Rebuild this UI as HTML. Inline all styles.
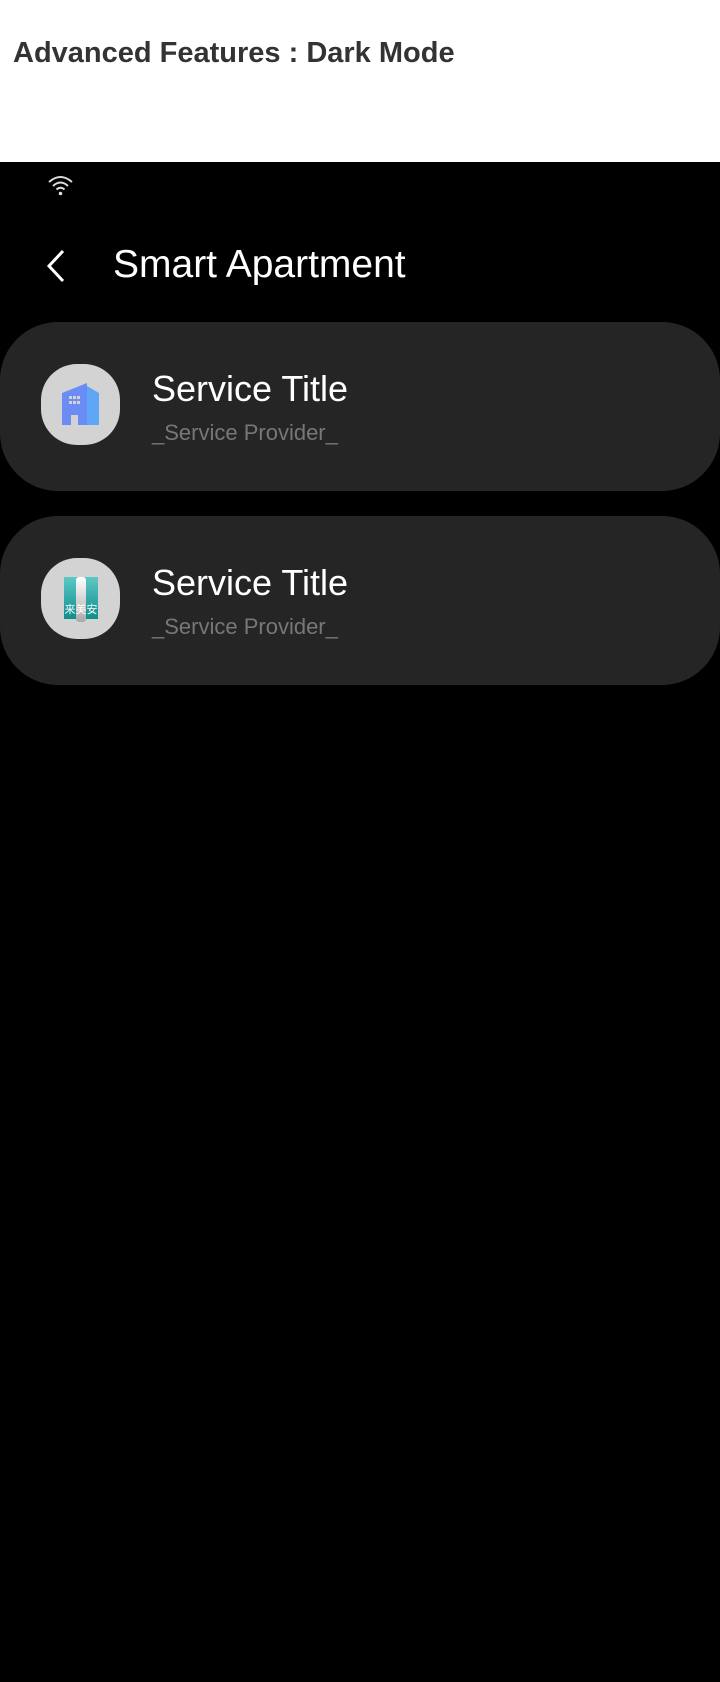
<!DOCTYPE html>
<html><head><meta charset="utf-8"><style>
*{margin:0;padding:0;box-sizing:border-box}
body{width:720px;height:1682px;background:#000;position:relative;overflow:hidden;font-family:"Liberation Sans",sans-serif}
.hdr{position:absolute;left:0;top:0;width:720px;height:162px;background:#fff}
.hdr span{position:absolute;left:13px;top:37px;font-size:29px;font-weight:bold;color:#333;white-space:nowrap}
.t{position:absolute;white-space:nowrap;transform-origin:left top}
.card{position:absolute;left:0;width:720px;height:169px;background:#252525;border-radius:58px}
.icon{position:absolute;left:41px;top:42px;width:79px;height:81px;background:#d3d3d3;border-radius:36px}
</style></head><body>
<div class="hdr"><span>Advanced Features : Dark Mode</span></div>
<svg style="position:absolute;left:47px;top:174px" width="27" height="22" viewBox="0 0 27 22">
<path d="M2 8 Q13.5 -2 25 8" stroke="#ddd" stroke-width="2" fill="none"/>
<path d="M6 12 Q13.5 5 21 12" stroke="#ddd" stroke-width="2" fill="none"/>
<path d="M9.5 15.5 Q13.5 12 17.5 15.5" stroke="#ddd" stroke-width="2" fill="none"/>
<circle cx="13.5" cy="19.5" r="1.8" fill="#ddd"/>
</svg>
<svg style="position:absolute;left:44px;top:249px" width="24" height="34" viewBox="0 0 24 34">
<path d="M19 2 L5 17 L19 32" stroke="#fff" stroke-width="3" fill="none"/>
</svg>
<div class="t" style="left:113px;top:243px;font-size:39px;color:#fff">Smart Apartment</div>

<div class="card" style="top:322px">
<div class="icon">
<svg style="position:absolute;left:21px;top:19px" width="38" height="42" viewBox="0 0 38 42">
<path d="M0 10 L25 0 L25 42 L0 42 Z" fill="#6b8cf5"/>
<path d="M25 3 L37 10 L37 42 L25 42 Z" fill="#5fa6f7"/>
<rect x="9" y="32" width="7" height="10" fill="#d3d3d3"/>
<g fill="#d3d3d3"><rect x="7" y="13" width="3" height="3"/><rect x="11" y="13" width="3" height="3"/><rect x="15" y="13" width="3" height="3"/><rect x="7" y="18" width="3" height="3"/><rect x="11" y="18" width="3" height="3"/><rect x="15" y="18" width="3" height="3"/></g>
</svg>
</div>
<div class="t" style="left:152px;top:46px;font-size:36px;color:#fff">Service Title</div>
<div class="t" style="left:152px;top:98px;font-size:22px;color:#777">_Service Provider_</div>
</div>

<div class="card" style="top:516px">
<div class="icon">
<svg style="position:absolute;left:23px;top:19px" width="34" height="45" viewBox="0 0 34 45">
<defs><linearGradient id="g" x1="0" y1="0" x2="0" y2="1"><stop offset="0" stop-color="#5cc8c6"/><stop offset="1" stop-color="#0e8e8c"/></linearGradient>
<linearGradient id="w" x1="0" y1="0" x2="0" y2="1"><stop offset="0" stop-color="#fff"/><stop offset="1" stop-color="#aaa"/></linearGradient></defs>
<rect x="0" y="0" width="34" height="42" fill="url(#g)"/>
<rect x="12" y="0" width="10" height="45" rx="3" fill="url(#w)"/>
<text x="17" y="36" font-size="11" fill="#fff" text-anchor="middle" font-family="Noto Sans CJK SC,sans-serif">来美安</text>
</svg>
</div>
<div class="t" style="left:152px;top:46px;font-size:36px;color:#fff">Service Title</div>
<div class="t" style="left:152px;top:98px;font-size:22px;color:#777">_Service Provider_</div>
</div>
</body></html>
